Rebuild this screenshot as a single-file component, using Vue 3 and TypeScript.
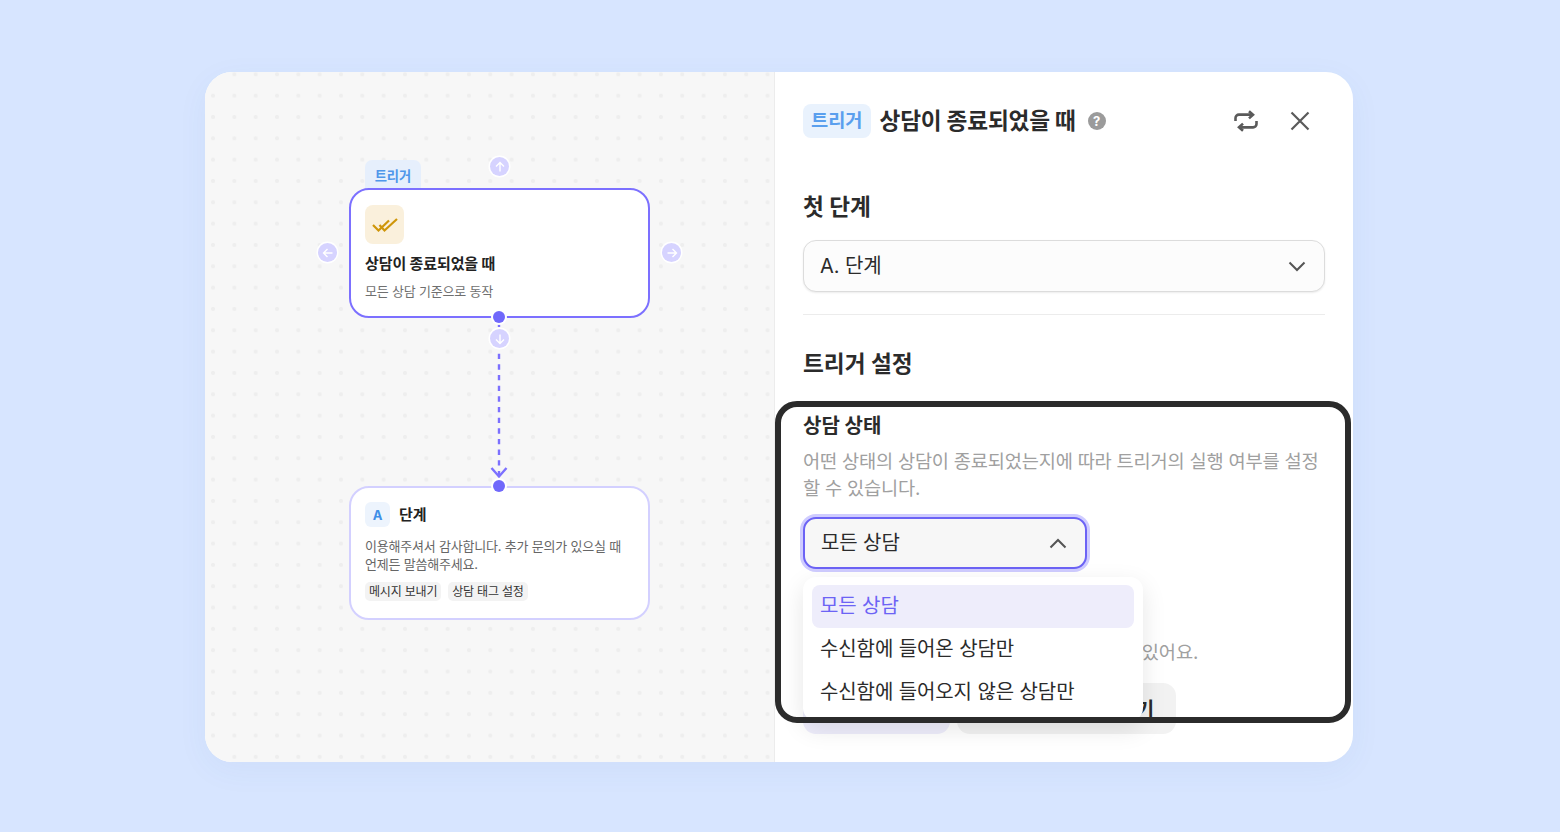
<template>
  <div class="page">
    <div class="shell">
      <section class="canvas">
        <div class="node trigger-node">
          <span class="node-tag">트리거</span>
          <div class="node-icon">
            <svg width="26" height="16" viewBox="0 0 26 16" fill="none" stroke="#cf960a" stroke-width="2.2">
              <path d="M1 8l5.5 5.5L17 3.5" />
              <path d="M7.5 8l5 5.5L25 2" />
            </svg>
          </div>
          <div class="node-title">상담이 종료되었을 때</div>
          <div class="node-sub">모든 상담 기준으로 동작</div>
        </div>

        <div class="node step-node">
          <div class="step-head">
            <span class="step-badge">A</span>
            <span class="node-title">단계</span>
          </div>
          <p class="step-text">이용해주셔서 감사합니다. 추가 문의가 있으실 때<br />언제든 말씀해주세요.</p>
          <div class="chips">
            <span class="chip">메시지 보내기</span>
            <span class="chip">상담 태그 설정</span>
          </div>
        </div>

        <svg class="edge" width="24" height="172" viewBox="0 0 24 172" fill="none" stroke="#7c70ff">
          <path d="M12 3.7V162" stroke-width="2.4" stroke-dasharray="5.33 5.33" />
          <path d="M4.5 150 12 158.5 19.5 150" stroke-width="2.4" />
        </svg>

        <span class="port port-out"></span>
        <span class="port port-in"></span>

        <span v-for="a in arrows" :key="a.name" class="add-btn" :class="a.name">
          <svg width="12" height="12" viewBox="0 0 12 12" fill="none" stroke="#fff" stroke-width="1.4" :style="{ transform: `rotate(${a.deg}deg)` }">
            <path d="M6 10.5V1.5M2 5.5l4-4 4 4" />
          </svg>
        </span>
      </section>

      <aside class="panel">
        <header class="panel-head">
          <span class="head-tag">트리거</span>
          <h1 class="head-title">상담이 종료되었을 때</h1>
          <span class="help">?</span>
          <svg class="swap" width="26" height="26" viewBox="0 0 26 26" fill="none" stroke="#5a5a5a" stroke-width="2.6">
            <path d="M16 3.2 20 6.8 16 10.4" />
            <path d="M2.5 13V10a3.4 3.4 0 0 1 3.4-3.4H20" />
            <path d="M10 15.6 6 19.2 10 22.8" />
            <path d="M23.5 13v3a3.4 3.4 0 0 1-3.4 3.4H6" />
          </svg>
          <svg class="close" width="22" height="22" viewBox="0 0 22 22" fill="none" stroke="#5a5a5a" stroke-width="2.2">
            <path d="M2.5 2.5 19.5 19.5M19.5 2.5 2.5 19.5" />
          </svg>
        </header>

        <h2 class="section-title first">첫 단계</h2>
        <div class="select wide">
          <span>A. 단계</span>
          <svg width="18" height="11" viewBox="0 0 18 11" fill="none" stroke="#555" stroke-width="2">
            <path d="M1.5 1.5 9 9l7.5-7.5" />
          </svg>
        </div>
        <hr class="divider" />

        <h2 class="section-title">트리거 설정</h2>

        <h3 class="field-title">상담 상태</h3>
        <p class="field-desc">어떤 상태의 상담이 종료되었는지에 따라 트리거의 실행 여부를 설정할 수 있습니다.</p>

        <div class="select-wrap">
          <div class="select open">
            <span>모든 상담</span>
            <svg width="18" height="11" viewBox="0 0 18 11" fill="none" stroke="#555" stroke-width="2">
              <path d="M1.5 9.5 9 2l7.5 7.5" />
            </svg>
          </div>
          <ul class="menu">
            <li v-for="(opt, i) in options" :key="opt" :class="{ active: i === 0 }">{{ opt }}</li>
          </ul>
        </div>

        <h3 class="field-title under">실행 조건</h3>
        <p class="field-desc hint">조건을 추가해 상담에만 트리거를 실행할 수 있어요.</p>
        <div class="actions">
          <button class="btn primary">조건 추가하기</button>
          <button class="btn">담당자 태그 추가하기</button>
        </div>
      </aside>

      <div class="highlight"></div>
    </div>
  </div>
</template>

<script setup lang="ts">
const options = ['모든 상담', '수신함에 들어온 상담만', '수신함에 들어오지 않은 상담만']

const arrows = [
  { name: 'up', deg: 0 },
  { name: 'down', deg: 180 },
  { name: 'left', deg: -90 },
  { name: 'right', deg: 90 },
]
</script>

<style>
html,
body {
  background: #d7e5ff;
}
</style>

<style scoped>
.page {
  height: 832px;
  padding: 72px 207px 70px 205px;
  box-sizing: border-box;
  background: #d7e5ff;
  font-family: Inter, "Noto Sans CJK KR", sans-serif;
  color: #2b2b2b;
  overflow: hidden;
}

.shell {
  position: relative;
  display: flex;
  height: 690px;
  background: #fff;
  border-radius: 27px;
  overflow: hidden;
  box-shadow: 0 8px 32px rgba(60, 90, 160, 0.05);
}

.canvas {
  position: relative;
  isolation: isolate;
  width: 569px;
  flex-shrink: 0;
  border-right: 1px solid #ececec;
  background-color: #f7f7f7;
  background-image: radial-gradient(circle, #eeeeee 1.8px, transparent 2.3px);
  background-size: 21.33px 21.33px;
  background-position: -2.67px 13px;
}

.node {
  position: absolute;
  left: 144px;
  width: 301px;
  box-sizing: border-box;
  background: #fff;
  border-radius: 20px;
  padding: 15px 14px;
}

.trigger-node {
  top: 116px;
  height: 130px;
  border: 2.5px solid #7c70ff;
}

.node-tag {
  position: absolute;
  left: 14px;
  top: -30px;
  width: 56px;
  height: 40px;
  z-index: -1;
  padding-top: 7px;
  box-sizing: border-box;
  text-align: center;
  border-radius: 7px;
  background: #e6effc;
  color: #4f97ea;
  font-size: 13.3px;
  font-weight: 700;
  line-height: 18px;
}

.node-icon {
  display: flex;
  align-items: center;
  justify-content: center;
  width: 39px;
  height: 39px;
  border-radius: 8px;
  background: #faf0dc;
}

.node-title {
  font-size: 15px;
  font-weight: 700;
  line-height: 20px;
  letter-spacing: -0.1px;
  color: #222;
}

.trigger-node .node-title {
  margin-top: 10px;
}

.node-sub {
  margin-top: 7px;
  font-size: 13px;
  line-height: 20px;
  letter-spacing: -0.2px;
  color: #6f6f6f;
}

.step-node {
  top: 414px;
  height: 134px;
  padding-top: 14px;
  border: 2.5px solid #d3d0ff;
}

.step-head {
  display: flex;
  align-items: center;
  gap: 9px;
}

.step-badge {
  display: flex;
  align-items: center;
  justify-content: center;
  width: 25px;
  height: 25px;
  border-radius: 6px;
  background: #edf4fd;
  color: #3f8fe8;
  font-size: 13px;
  font-weight: 700;
}

.step-text {
  margin: 11px 0 0;
  font-size: 13px;
  line-height: 17.5px;
  letter-spacing: -0.2px;
  color: #666;
}

.chips {
  display: flex;
  gap: 7px;
  margin-top: 9px;
}

.chip {
  padding: 0 4px;
  height: 19px;
  line-height: 19px;
  border-radius: 5px;
  background: #f3f3f3;
  font-size: 12px;
  letter-spacing: -0.2px;
  color: #333;
}

.edge {
  position: absolute;
  left: 282px;
  top: 246px;
}

.port {
  position: absolute;
  left: 288px;
  width: 12px;
  height: 12px;
  box-sizing: border-box;
  border-radius: 50%;
  background: #7068fb;
  box-shadow: 0 0 0 2px #fff;
}

.port-out {
  top: 239px;
}

.port-in {
  top: 408px;
}

.add-btn {
  position: absolute;
  display: flex;
  align-items: center;
  justify-content: center;
  width: 19px;
  height: 19px;
  border-radius: 50%;
  background: #d6d3ff;
  box-shadow: 0 0 0 1.5px #fff;
}

.add-btn.up {
  left: 285px;
  top: 85px;
}

.add-btn.down {
  left: 285px;
  top: 257px;
}

.add-btn.left {
  left: 113px;
  top: 171px;
}

.add-btn.right {
  left: 457px;
  top: 171px;
}

.panel {
  flex: 1;
  min-width: 0;
  padding: 32px 28px 0;
}

.panel-head {
  display: flex;
  align-items: center;
  height: 34px;
}

.head-tag {
  height: 34px;
  line-height: 34px;
  padding: 0 8px;
  border-radius: 8px;
  background: #e9f2fd;
  color: #5a9fee;
  font-size: 18.67px;
  font-weight: 700;
}

.head-title {
  margin: 0 0 0 9px;
  font-size: 22.67px;
  font-weight: 700;
  line-height: 36px;
  letter-spacing: -0.2px;
  color: #2b2b2b;
}

.help {
  display: flex;
  align-items: center;
  justify-content: center;
  width: 18px;
  height: 18px;
  margin-left: 12px;
  border-radius: 50%;
  background: #9b9b9b;
  color: #fff;
  font-size: 13px;
  font-weight: 700;
}

.swap {
  margin-left: auto;
}

.close {
  margin: 0 14px 0 30px;
}

.section-title {
  margin: 0;
  font-size: 22.67px;
  font-weight: 700;
  line-height: 32px;
  color: #2b2b2b;
}

.section-title.first {
  margin-top: 53px;
}

.select {
  display: flex;
  align-items: center;
  justify-content: space-between;
  box-sizing: border-box;
  height: 52px;
  padding: 0 18px 3px 16px;
  border-radius: 13px;
  font-size: 20px;
  letter-spacing: -0.1px;
  color: #2b2b2b;
}

.select svg {
  margin-top: 3px;
}

.select.wide {
  margin-top: 17px;
  border: 1.5px solid #dcdcdc;
  background: #fcfcfc;
  box-shadow: 0 1px 2px rgba(0, 0, 0, 0.08);
}

.divider {
  margin: 22px 0 33px;
  border: 0;
  border-top: 1px solid #ececec;
}

.field-title {
  margin: 32px 0 0;
  font-size: 20px;
  font-weight: 700;
  line-height: 28px;
  color: #2b2b2b;
}

.field-desc {
  margin: 9px 0 0;
  font-size: 18.67px;
  line-height: 26.67px;
  letter-spacing: -0.2px;
  color: #a0a0a0;
}

.field-desc.hint {
  letter-spacing: -0.07px;
}

.select-wrap {
  position: relative;
  width: 284px;
  margin-top: 15px;
}

.select.open {
  border: 2px solid #6c63f5;
  background: #f7f7f7;
  box-shadow: 0 0 0 3px #cfccff;
}

.menu {
  position: absolute;
  z-index: 2;
  left: 0;
  top: 60px;
  width: 340px;
  box-sizing: border-box;
  margin: 0;
  padding: 8px 9px;
  list-style: none;
  background: #fff;
  border-radius: 13px;
  box-shadow: 0 8px 24px rgba(0, 0, 0, 0.1);
}

.menu li {
  height: 42.67px;
  line-height: 42.67px;
  padding: 0 8px;
  border-radius: 8px;
  font-size: 20px;
  letter-spacing: -0.1px;
  color: #2b2b2b;
}

.menu li.active {
  background: #eeedfb;
  color: #6c63f5;
}

.field-title.under {
  margin-top: 34px;
}

.actions {
  display: flex;
  gap: 7px;
  margin-top: 16px;
}

.btn {
  width: 219px;
  height: 51px;
  padding: 0;
  border: 0;
  border-radius: 13px;
  background: #f2f2f2;
  font: 700 20px Inter, "Noto Sans CJK KR", sans-serif;
  color: #2b2b2b;
  white-space: nowrap;
}

.btn.primary {
  width: 147px;
  background: #eeedfb;
  color: #6c63f5;
}

.highlight {
  position: absolute;
  z-index: 3;
  left: 570px;
  top: 329px;
  width: 576px;
  height: 322px;
  box-sizing: border-box;
  border: 6px solid #2b2b2b;
  border-radius: 22px;
  pointer-events: none;
}
</style>
